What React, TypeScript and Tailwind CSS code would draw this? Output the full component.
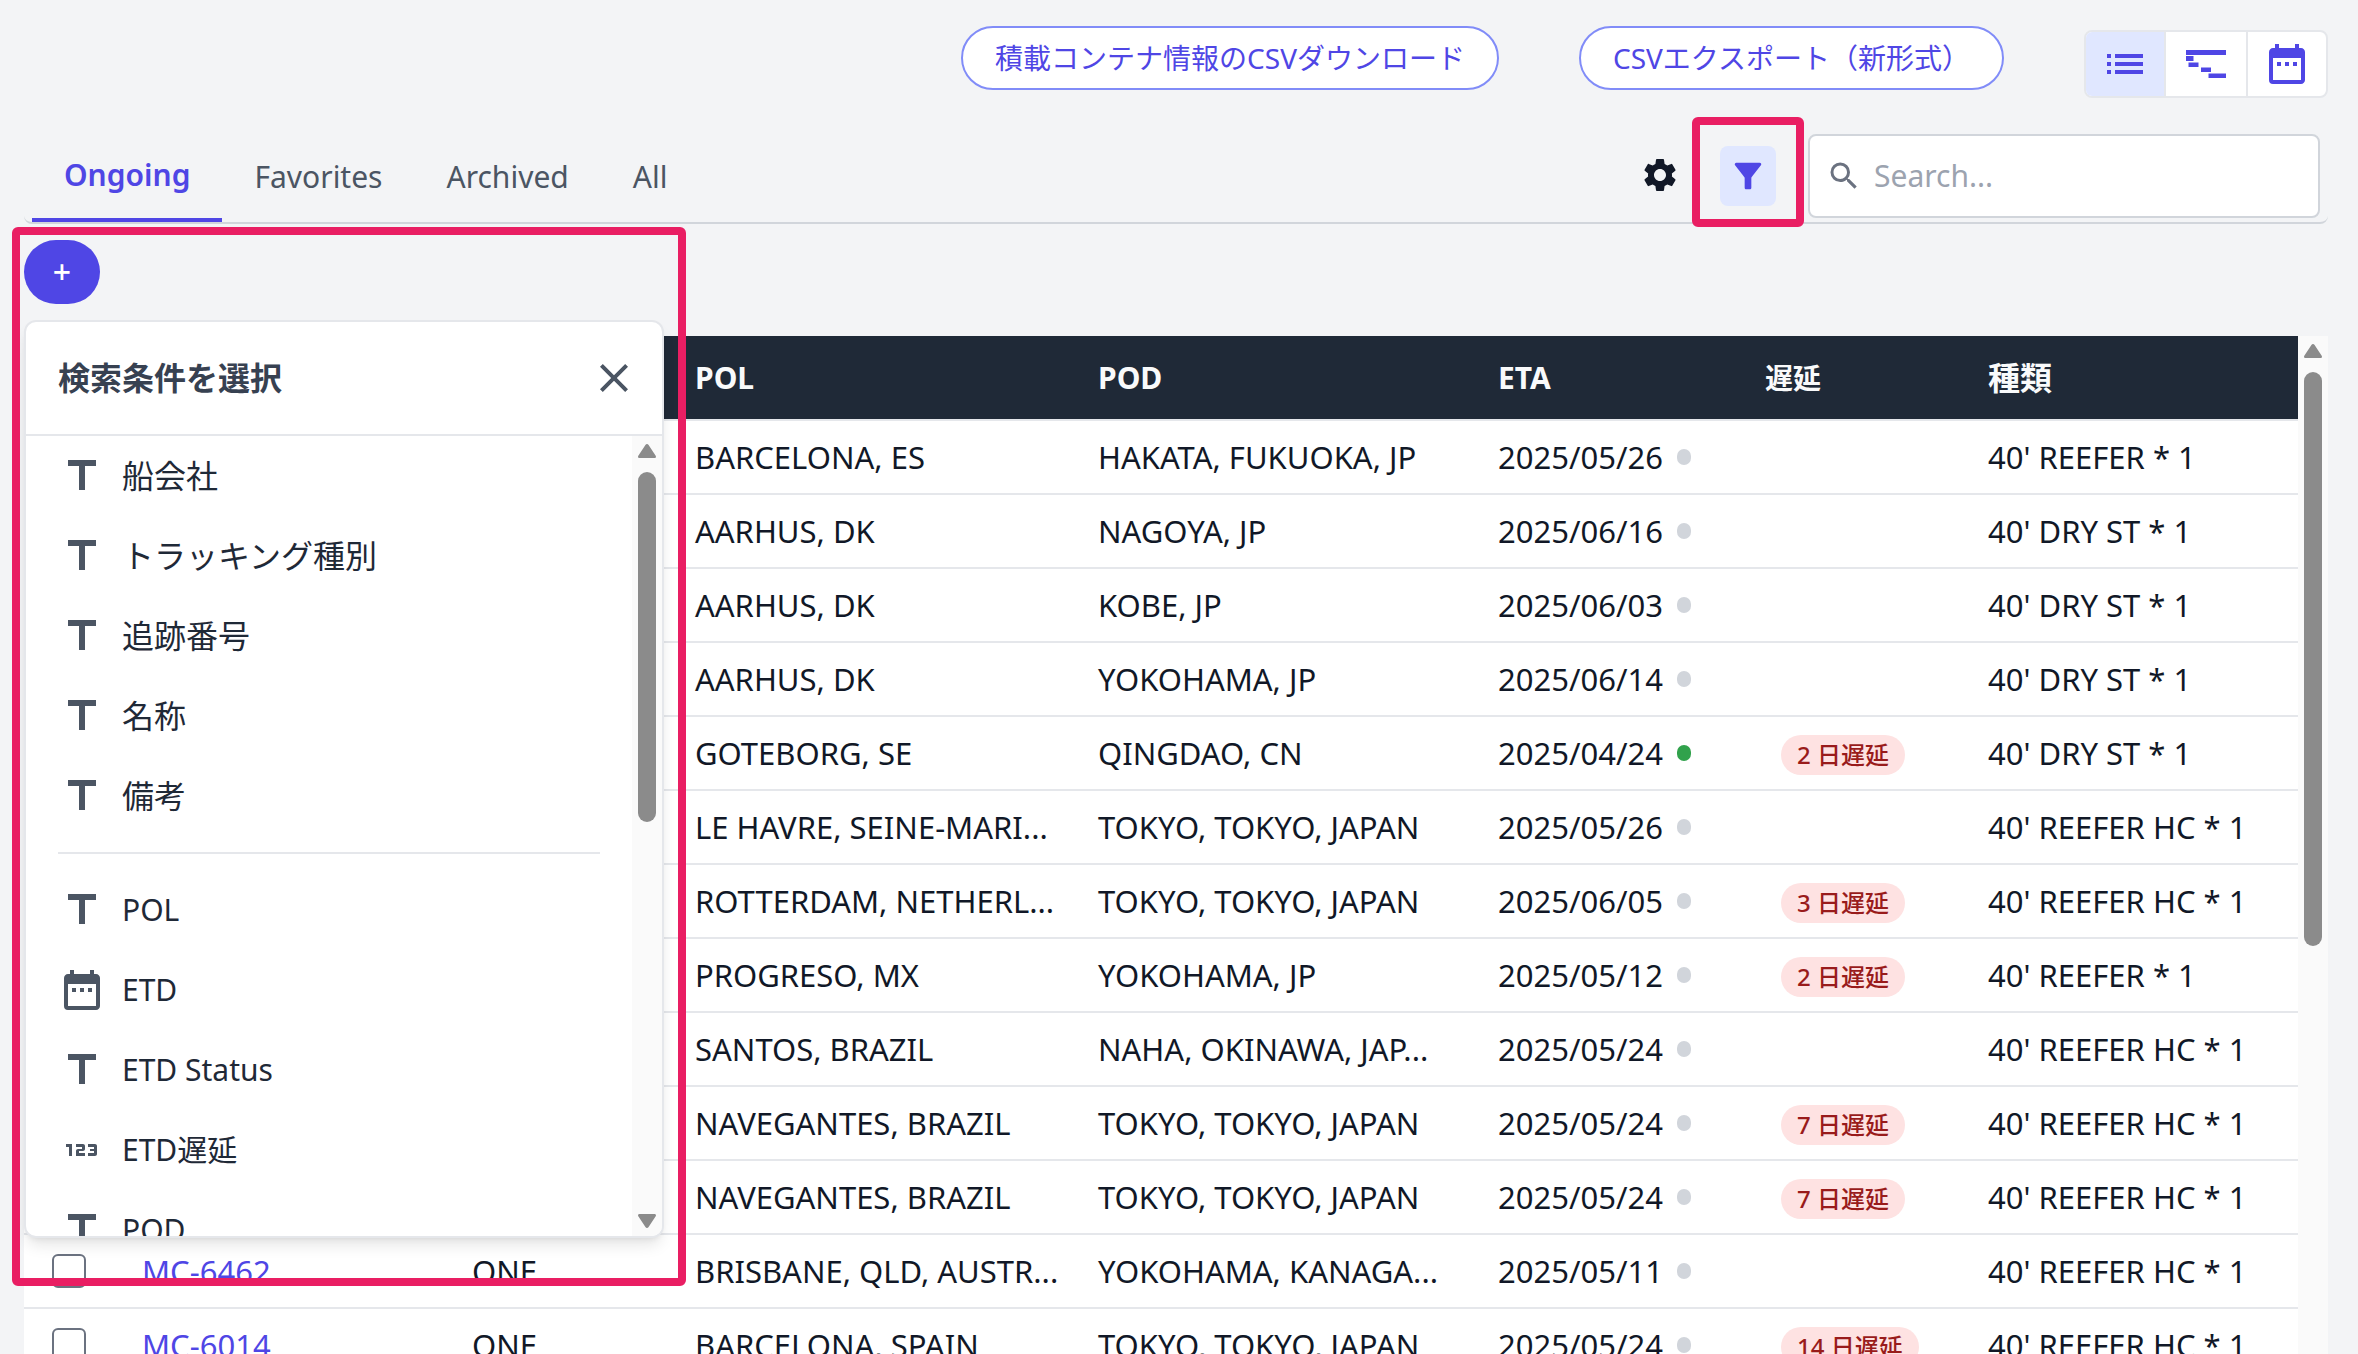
import React from "react";
import {
  Md123,
  MdClose,
  MdDateRange,
  MdFilterAlt,
  MdList,
  MdSearch,
  MdSettings,
  MdTitle,
} from "react-icons/md";

type Row = {
  id?: string;
  carrier?: string;
  pol: string;
  pod: string;
  eta: string;
  arrived?: boolean;
  delay?: number;
  type: string;
};

const rows: Row[] = [
  { pol: "BARCELONA, ES", pod: "HAKATA, FUKUOKA, JP", eta: "2025/05/26", type: "40' REEFER * 1" },
  { pol: "AARHUS, DK", pod: "NAGOYA, JP", eta: "2025/06/16", type: "40' DRY ST * 1" },
  { pol: "AARHUS, DK", pod: "KOBE, JP", eta: "2025/06/03", type: "40' DRY ST * 1" },
  { pol: "AARHUS, DK", pod: "YOKOHAMA, JP", eta: "2025/06/14", type: "40' DRY ST * 1" },
  { pol: "GOTEBORG, SE", pod: "QINGDAO, CN", eta: "2025/04/24", arrived: true, delay: 2, type: "40' DRY ST * 1" },
  { pol: "LE HAVRE, SEINE-MARI...", pod: "TOKYO, TOKYO, JAPAN", eta: "2025/05/26", type: "40' REEFER HC * 1" },
  { pol: "ROTTERDAM, NETHERL...", pod: "TOKYO, TOKYO, JAPAN", eta: "2025/06/05", delay: 3, type: "40' REEFER HC * 1" },
  { pol: "PROGRESO, MX", pod: "YOKOHAMA, JP", eta: "2025/05/12", delay: 2, type: "40' REEFER * 1" },
  { pol: "SANTOS, BRAZIL", pod: "NAHA, OKINAWA, JAP...", eta: "2025/05/24", type: "40' REEFER HC * 1" },
  { pol: "NAVEGANTES, BRAZIL", pod: "TOKYO, TOKYO, JAPAN", eta: "2025/05/24", delay: 7, type: "40' REEFER HC * 1" },
  { pol: "NAVEGANTES, BRAZIL", pod: "TOKYO, TOKYO, JAPAN", eta: "2025/05/24", delay: 7, type: "40' REEFER HC * 1" },
  { id: "MC-6462", carrier: "ONE", pol: "BRISBANE, QLD, AUSTR...", pod: "YOKOHAMA, KANAGA...", eta: "2025/05/11", type: "40' REEFER HC * 1" },
  { id: "MC-6014", carrier: "ONE", pol: "BARCELONA, SPAIN", pod: "TOKYO, TOKYO, JAPAN", eta: "2025/05/24", delay: 14, type: "40' REEFER HC * 1" },
];

type Criterion = { label: string; kind: "text" | "date" | "number" };

const generalCriteria: Criterion[] = [
  { label: "船会社", kind: "text" },
  { label: "トラッキング種別", kind: "text" },
  { label: "追跡番号", kind: "text" },
  { label: "名称", kind: "text" },
  { label: "備考", kind: "text" },
];

const scheduleCriteria: Criterion[] = [
  { label: "POL", kind: "text" },
  { label: "ETD", kind: "date" },
  { label: "ETD Status", kind: "text" },
  { label: "ETD遅延", kind: "number" },
  { label: "POD", kind: "text" },
];

function CriterionItem({ label, kind }: Criterion) {
  const Icon = kind === "date" ? MdDateRange : kind === "number" ? Md123 : MdTitle;
  return (
    <li>
      <button type="button" className="flex h-20 w-full items-center gap-4 pl-8 text-left text-[#1f2937]">
        <Icon className="size-12 shrink-0 text-[#4b5563]" />
        <span>{label}</span>
      </button>
    </li>
  );
}

function ScrollArrow({ down = false }: { down?: boolean }) {
  return (
    <svg viewBox="0 0 18 14" className="h-[14px] w-[18px] shrink-0 fill-[#8b8b8b]" aria-hidden="true">
      {down ? (
        <path d="M1.5 0h15c1.2 0 1.9 1.2 1.2 2.2L10.600 13c-.8 1.300-2.400 1.300-3.200 0L.3 2.200C-.4 1.200.3 0 1.500 0z" />
      ) : (
        <path d="M1.500 14h15c1.200 0 1.900-1.200 1.200-2.200L10.600 1C9.800-.3 8.200-.3 7.400 1L.3 11.800C-.4 12.800.3 14 1.500 14z" />
      )}
    </svg>
  );
}

function GanttIcon() {
  return (
    <svg viewBox="0 0 40 28" className="h-7 w-10 fill-current" aria-hidden="true">
      <path d="M0 0h40v5H0zM0 6h7.500v5H0zM2.500 12.500h10v4.500h-10zM15 17.500h10v4.500H15zM22.500 23.500H40V28H22.500z" />
    </svg>
  );
}

function FilterPanel() {
  return (
    <section
      aria-label="検索条件を選択"
      className="absolute top-full left-0 z-10 mt-4 flex h-[918px] w-[640px] flex-col overflow-hidden rounded-xl border-2 border-[#e5e7eb] bg-white shadow-lg"
    >
      <header className="flex h-[114px] shrink-0 items-center justify-between border-b-2 border-[#e5e7eb] pr-6 pl-8">
        <h2 className="text-[32px] font-bold text-[#374151]">検索条件を選択</h2>
        <button type="button" aria-label="閉じる" className="text-[#4b5563]">
          <MdClose className="size-12" />
        </button>
      </header>
      <div className="flex min-h-0 flex-1">
        <div className="flex-1 overflow-hidden">
          <ul className="text-[32px]">
            {generalCriteria.map((c) => (
              <CriterionItem key={c.label} {...c} />
            ))}
          </ul>
          <hr className="mx-8 my-4 border-t-2 border-[#e5e7eb]" />
          <ul>
            {scheduleCriteria.map((c) => (
              <CriterionItem key={c.label} {...c} />
            ))}
          </ul>
        </div>
        <div className="flex w-[30px] flex-col items-center bg-[#fafafa] py-2">
          <ScrollArrow />
          <div className="mt-[14px] h-[350px] w-[18px] rounded-full bg-[#8b8b8b]" />
          <div className="flex-1" />
          <ScrollArrow down />
        </div>
      </div>
    </section>
  );
}

function Toolbar() {
  const pill = "h-16 rounded-full border-2 border-[#818cf8] bg-white px-8 text-[28px] leading-none text-[#4f46e5]";
  return (
    <div className="flex items-start justify-end gap-20">
      <button type="button" className={pill}>積載コンテナ情報のCSVダウンロード</button>
      <button type="button" className={pill}>CSVエクスポート（新形式）</button>
      <div className="mt-1 flex h-[68px] divide-x-2 divide-[#e5e7eb] overflow-hidden rounded-lg border-2 border-[#e5e7eb] bg-white text-[#4f46e5]">
        <button type="button" aria-label="リスト" className="flex w-20 items-center justify-center bg-[#e0e7ff]">
          <MdList className="size-12" />
        </button>
        <button type="button" aria-label="ガントチャート" className="flex w-[82px] items-center justify-center">
          <GanttIcon />
        </button>
        <button type="button" aria-label="カレンダー" className="flex w-[78px] items-center justify-center">
          <MdDateRange className="size-12" />
        </button>
      </div>
    </div>
  );
}

function TabBar() {
  return (
    <div className="mt-5 flex h-[106px] items-end rounded-lg border-b-2 border-[#d1d5db] px-2">
      <nav className="flex flex-1">
        <a href="#ongoing" className="flex h-[90px] items-center border-b-4 border-[#4f46e5] px-8 font-semibold text-[#4f46e5]">Ongoing</a>
        {["Favorites", "Archived", "All"].map((t) => (
          <a key={t} href={"#" + t.toLowerCase()} className="flex h-[90px] items-center px-8 text-[#4b5563]">{t}</a>
        ))}
      </nav>
      <div className="flex h-[88px] items-center pb-1">
        <button type="button" aria-label="設定" className="mr-10 pb-0.5 text-[#111827]">
          <MdSettings className="size-10" />
        </button>
        <div className="relative mr-8 flex">
          <button type="button" aria-label="フィルター" className="flex h-[60px] w-14 items-center justify-center rounded-lg bg-[#e0e7ff] text-[#4f46e5]">
            <MdFilterAlt className="size-10" />
          </button>
          <div className="pointer-events-none absolute -inset-x-7 -top-[29px] -bottom-[21px] rounded-md border-8 border-[#e91e63]" />
        </div>
        <label className="flex h-[84px] w-[512px] items-center gap-3 self-start rounded-lg border-2 border-[#d1d5db] bg-white pl-4">
          <MdSearch className="size-9 text-[#6b7280]" />
          <input type="text" aria-label="Search" placeholder="Search..." className="min-w-0 flex-1 outline-none placeholder:text-[#9ca3af]" />
        </label>
      </div>
    </div>
  );
}

function ShipmentTable() {
  return (
    <div className="mt-8 flex min-h-0 flex-1 bg-white">
      <div className="min-w-0 flex-1 overflow-hidden">
        <table className="w-full table-fixed border-collapse text-left whitespace-nowrap text-[#111827]">
          <colgroup>
            <col className="w-[102px]" />
            <col className="w-[330px]" />
            <col className="w-[223px]" />
            <col className="w-[403px]" />
            <col className="w-[400px]" />
            <col className="w-[267px]" />
            <col className="w-[223px]" />
            <col />
          </colgroup>
          <thead>
            <tr className="h-[84px] border-b-2 border-[#e5e7eb] bg-[#1f2937] text-[#f9fafb]">
              <th />
              <th />
              <th />
              <th className="px-4 font-bold">POL</th>
              <th className="px-4 font-bold">POD</th>
              <th className="px-4 font-bold">ETA</th>
              <th className="px-4 text-[28px] font-bold">遅延</th>
              <th className="px-4 text-[32px] font-bold">種類</th>
            </tr>
          </thead>
          <tbody className="text-[31px]">
            {rows.map((r, i) => (
              <tr key={i} className="h-[74px] border-b-2 border-[#e5e7eb]">
                <td className="pl-7">
                  <input
                    type="checkbox"
                    aria-label={r.id ?? "行を選択"}
                    className="block size-[34px] appearance-none rounded-md border-2 border-[#6b7280] bg-white"
                  />
                </td>
                <td className="px-4">{r.id && <a href={"#" + r.id} className="text-[#4f46e5]">{r.id}</a>}</td>
                <td className="px-4">{r.carrier}</td>
                <td className="px-4">{r.pol}</td>
                <td className="px-4">{r.pod}</td>
                <td className="px-4">
                  <div className="flex items-center gap-[14px]">
                    {r.eta}
                    <span className={r.arrived ? "h-4 w-[14px] rounded-full bg-[#31a24c]" : "h-4 w-[14px] rounded-full bg-[#d1d5db]"} />
                  </div>
                </td>
                <td className="px-8">
                  {r.delay && (
                    <span className="inline-flex h-10 items-center rounded-full bg-[#fee2e2] px-4 align-middle text-2xl font-medium text-[#991b1b]">
                      {r.delay} 日遅延
                    </span>
                  )}
                </td>
                <td className="px-4">{r.type}</td>
              </tr>
            ))}
          </tbody>
        </table>
      </div>
      <div className="flex w-[30px] flex-col items-center bg-[#fafafa] py-2">
        <ScrollArrow />
        <div className="mt-[14px] h-[574px] w-[18px] rounded-full bg-[#8b8b8b]" />
      </div>
    </div>
  );
}

export default function App() {
  return (
    <div className="flex h-screen flex-col overflow-hidden bg-[#f3f4f6] pt-[26px] pr-[30px] pl-6 font-['Noto_Sans','Noto_Sans_CJK_JP',sans-serif] text-[30px] leading-10">
      <Toolbar />
      <TabBar />
      <div className="relative mt-4 flex">
        <button type="button" aria-label="検索条件を追加" className="flex h-16 w-[76px] items-center justify-center rounded-full bg-[#4f46e5] text-[32px] font-medium text-white">
          +
        </button>
        <FilterPanel />
        <div className="pointer-events-none absolute -top-[13px] -left-3 z-20 h-[1059px] w-[674px] rounded-md border-8 border-[#e91e63]" />
      </div>
      <ShipmentTable />
    </div>
  );
}
